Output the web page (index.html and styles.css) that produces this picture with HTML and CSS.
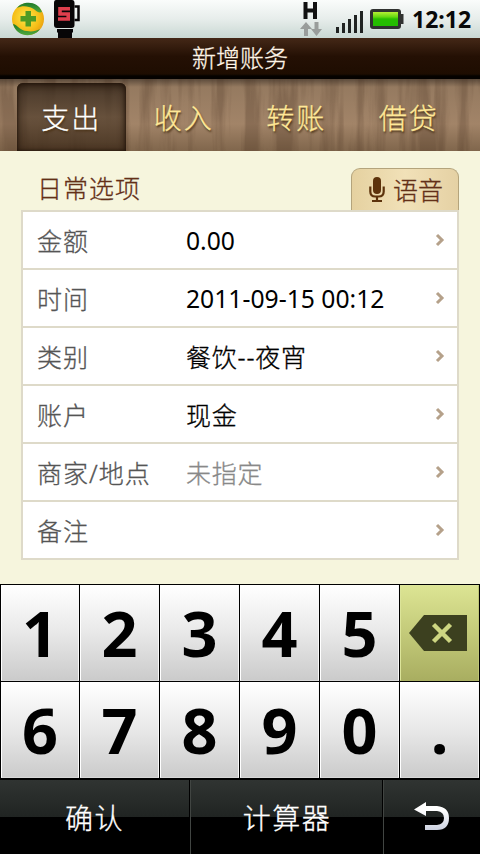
FILE: index.html
```html
<!DOCTYPE html>
<html lang="zh-CN">
<head>
<meta charset="utf-8">
<title>新增账务</title>
<link rel="stylesheet" href="styles.css">
</head>
<body>
<div class="phone">
  <header class="status">
    <svg class="status-left" width="90" height="38" viewBox="0 0 90 38">
      <defs>
        <radialGradient id="ball" cx=".45" cy=".45" r=".6"><stop offset="0" stop-color="#ffe94a"/><stop offset=".7" stop-color="#f5bd16"/><stop offset="1" stop-color="#e89d12"/></radialGradient>
        <linearGradient id="leaf" x1="0" y1="0" x2="0" y2="1"><stop offset="0" stop-color="#1f7a2c"/><stop offset="1" stop-color="#4fa83a"/></linearGradient>
      </defs>
      <circle cx="28" cy="19" r="16" fill="url(#ball)"/>
      <path d="M17 8C22 1 38 0 42 12C37 14 35 8 29 7C25 6 21 6 17 8Z" fill="url(#leaf)"/>
      <path d="M13 24C18 25 20 31 27 31C32 32 36 31 40 29C34 38 17 38 13 24Z" fill="url(#leaf)"/>
      <path d="M25.500 11h5.500v5h5v5.500h-5v5h-5.500v-5h-5v-5.500h5z" fill="#4f9a24"/>
      <path d="M56 0h16q2.500 0 2.500 3v22q0 3-3 3H57q-3 0-3-3V3q0-3 2-3zM57 29h16v3l-1 1v5H58v-5l-1-1z" fill="#080607"/>
      <path d="M74.500 6.500h4v13.500h-4" fill="none" stroke="#080607" stroke-width="2.500"/>
      <path d="M70 8.700H60v5.300h8.200v5H58" fill="none" stroke="#df3f4d" stroke-width="3.600"/>
    </svg>
    <div class="status-right">
      <svg width="110" height="38" viewBox="0 0 110 38">
        <defs><linearGradient id="power" x1="0" y1="0" x2="0" y2="1"><stop offset="0" stop-color="#b6ef35"/><stop offset=".35" stop-color="#65d811"/><stop offset=".5" stop-color="#27bd00"/><stop offset="1" stop-color="#22bd00"/></linearGradient></defs>
        <path d="M5.500 2v17M15 2v17M5.500 10.500H15" stroke="#111" stroke-width="4" fill="none"/>
        <path d="M6 22l6 7H8v7H4v-7H0zM14.500 22h4v7H22l-5.500 7-5.500-7h3.500z" fill="#999d9b"/>
        <path d="M36 27h3v6h-3zM42 23h3v10h-3zM48 19h3v14h-3zM54 15h3v18h-3zM60 11h3v22h-3z" fill="#202322"/>
        <rect x="70" y="9" width="31" height="20" rx="3" fill="#303230"/>
        <path d="M101 14h2.500v10H101z" fill="#303230"/>
        <rect x="73" y="12" width="25" height="14" fill="url(#power)"/>
      </svg>
      <span class="clock">12:12</span>
    </div>
  </header>
  <h1 class="title">新增账务</h1>
  <nav class="tabs">
    <svg class="grain" width="480" height="72">
      <filter id="wood" x="0" y="0" width="100%" height="100%" color-interpolation-filters="sRGB"><feTurbulence type="fractalNoise" baseFrequency=".07 .006" numOctaves="4" seed="8"/><feColorMatrix values="0 0 0 0 .25  0 0 0 0 .16  0 0 0 0 .1  4 0 0 0 -1.700"/></filter>
      <rect width="480" height="72" filter="url(#wood)"/>
    </svg>
    <a class="tab active">支出</a><a class="tab">收入</a><a class="tab">转账</a><a class="tab">借贷</a>
  </nav>
  <main class="content">
    <div class="section-head">
      <h2>日常选项</h2>
      <button class="voice">
        <svg width="16" height="26" viewBox="0 0 16 26"><rect x="4" y="0" width="8" height="17" rx="4" fill="#5d330c"/><path d="M1.300 9.500v5q0 5 5 5h3.400q5 0 5-5v-5M8 19v5M3 24h10" fill="none" stroke="#5d330c" stroke-width="2.200"/></svg>
        <span>语音</span>
      </button>
    </div>
    <div class="form">
      <div class="row"><span class="label">金额</span><span class="value">0.00</span><svg class="arrow" viewBox="0 0 10 14"><path d="M2 2l5 5-5 5"/></svg></div>
      <div class="row"><span class="label">时间</span><span class="value">2011-09-15 00:12</span><svg class="arrow" viewBox="0 0 10 14"><path d="M2 2l5 5-5 5"/></svg></div>
      <div class="row"><span class="label">类别</span><span class="value han">餐饮--夜宵</span><svg class="arrow" viewBox="0 0 10 14"><path d="M2 2l5 5-5 5"/></svg></div>
      <div class="row"><span class="label">账户</span><span class="value han">现金</span><svg class="arrow" viewBox="0 0 10 14"><path d="M2 2l5 5-5 5"/></svg></div>
      <div class="row"><span class="label">商家/地点</span><span class="value han unset">未指定</span><svg class="arrow" viewBox="0 0 10 14"><path d="M2 2l5 5-5 5"/></svg></div>
      <div class="row"><span class="label">备注</span><span class="value"></span><svg class="arrow" viewBox="0 0 10 14"><path d="M2 2l5 5-5 5"/></svg></div>
    </div>
  </main>
  <section class="keypad">
    <button class="key">1</button><button class="key">2</button><button class="key">3</button><button class="key">4</button><button class="key">5</button>
    <button class="key erase"><svg width="58" height="36" viewBox="0 0 58 36"><path d="M0 18L15 0h43v36H15z" fill="#3c401f"/><path d="M24.500 9.500l17 17M41.500 9.500l-17 17" stroke="#cdd581" stroke-width="4.500"/></svg></button>
    <button class="key">6</button><button class="key">7</button><button class="key">8</button><button class="key">9</button><button class="key">0</button><button class="key">.</button>
  </section>
  <footer class="actions">
    <button class="action">确认</button><button class="action">计算器</button>
    <button class="action"><svg width="36" height="30" viewBox="0 0 36 30"><defs><linearGradient id="back" x1="0" y1="0" x2="0" y2="1"><stop offset=".3" stop-color="#fff"/><stop offset="1" stop-color="#cbd0df"/></linearGradient></defs><path d="M0 7.500L12 0v4h11q12 1 12 12 0 12-12 12H11v-5h12q7-1 7-7 0-6-7-7H12v5z" fill="url(#back)"/></svg></button>
  </footer>
</div>
</body>
</html>
```
FILE: styles.css
```css
* { box-sizing: border-box; }
body { margin: 0; font-family: "Noto Sans", "Noto Sans CJK SC", sans-serif; }
button { margin: 0; padding: 0; border: 0; background: none; font: inherit; color: inherit; }
h1, h2 { margin: 0; font-weight: 400; }
svg { display: block; flex: none; }
.title, .tab, .section-head, .label, .han, .action { -webkit-text-stroke: .3px currentColor; }
.phone { width: 480px; height: 854px; display: flex; flex-direction: column; background: #f6f5dd; overflow: hidden; }
.status { height: 38px; flex: none; display: flex; justify-content: space-between; background: linear-gradient(#fafcfb, #e7edeb 50%, #c9d8d3); }
.status-right { display: flex; align-items: center; width: 180px; }
.clock { margin-left: 2px; font-size: 23px; line-height: 38px; font-weight: 700; color: #090909; white-space: nowrap; }
.title { height: 41px; flex: none; font-family: "Noto Sans CJK SC", sans-serif; font-size: 24px; line-height: 38px; text-align: center; color: #fff5e7; background: linear-gradient(#442817, #241004 45%, #1e0d01 36px, #050200 38px, #050200); font-weight: 300; }
.tabs { height: 72px; flex: none; position: relative; display: grid; grid-template-columns: repeat(4, 112.500px); padding: 0 15px; background: linear-gradient(#5c4b3c, #957a60 8px, #a28468 45px, #80664c); }
.grain { position: absolute; left: 0; top: 0; opacity: .24; }
.tab { position: relative; margin-top: 4px; font-family: "Noto Sans CJK SC", sans-serif; font-weight: 300; font-size: 28px; letter-spacing: 2px; line-height: 69px; height: 68px; text-align: center; color: #ffe897; text-shadow: 1px 2px 2px #4a3216; }
.tab.active { margin-right: 2px; margin-left: 2px; color: #fff; border-radius: 6px 6px 0 0; background: linear-gradient(#35271bcc, #574330c8 50%, #3e2b1ac8); box-shadow: inset 0 2px 8px #211309, inset 0 0 3px #211309; }
.content { flex: none; height: 433px; padding: 17px 21px 0; }
.section-head { height: 42px; display: flex; justify-content: space-between; padding-left: 16px; color: #632f17; font-family: "Noto Sans CJK SC", sans-serif; font-weight: 300; font-size: 25px; letter-spacing: 1px; }
.section-head h2 { font-size: 25px; line-height: 38px; font-weight: 300; }
.voice { width: 108px; height: 42px; display: flex; align-items: center; padding-left: 17px; gap: 8px; border: 1px solid #b4a47c; border-bottom: 0; border-radius: 9px 9px 0 0; background: linear-gradient(90deg, #e5d1a0, #f1e1b8 50%, #e5d1a4); }
.voice span { line-height: 36px; padding-bottom: 1px; }
.form { width: 438px; border: 2px solid #dedac9; background: #fff; }
.row { height: 58px; display: flex; align-items: center; padding: 0 12px 0 14px; border-bottom: 2px solid #dedac9; font-size: 24.700px; line-height: 54px; white-space: nowrap; }
.row:last-child { height: 56px; border: 0; }
.label, .value { padding-top: 2px; }
.label { width: 149px; color: #555; font-weight: 300; font-size: 25px; letter-spacing: 1px; }
.value { flex: 1; color: #000; }
.han { font-size: 25px; letter-spacing: .8px; font-weight: 300; }
.unset { color: #888; }
.arrow { width: 10px; height: 14px; fill: none; stroke: #b5a18a; stroke-width: 3; }
.keypad { flex: none; display: grid; grid-template-columns: 78px repeat(5, 79px); grid-template-rows: 96px 96px; gap: 1px; padding: 1px; height: 195px; background: #000; }
.key { display: flex; align-items: center; justify-content: center; border: 1px solid #fff; border-color: #fff #f8f8f8 #d8d8d8 #fff; background: linear-gradient(#fff, #e8e8e8 50%, #cbcbcb); font-size: 63px; line-height: 94px; font-weight: 700; color: #000; }
.erase { padding-right: 3px; border-color: #dce499 #bec577 #a9af62 #dce499; background: linear-gradient(#dce493, #c3ca79 50%, #a9ae61); }
.actions { height: 75px; flex: none; display: grid; grid-template-columns: 190px 193px 97px; border-top: 1px solid #000; background: linear-gradient(#303432, #202422 37px, #000 37px); }
.action { display: flex; align-items: center; justify-content: center; font-family: "Noto Sans CJK SC", sans-serif; font-size: 28px; font-weight: 300; letter-spacing: 1.500px; color: #fff; }
.action:first-child { padding-right: 1px; }
.action + .action { border-left: 1px solid #414542; box-shadow: -1px 0 #000; }
```
